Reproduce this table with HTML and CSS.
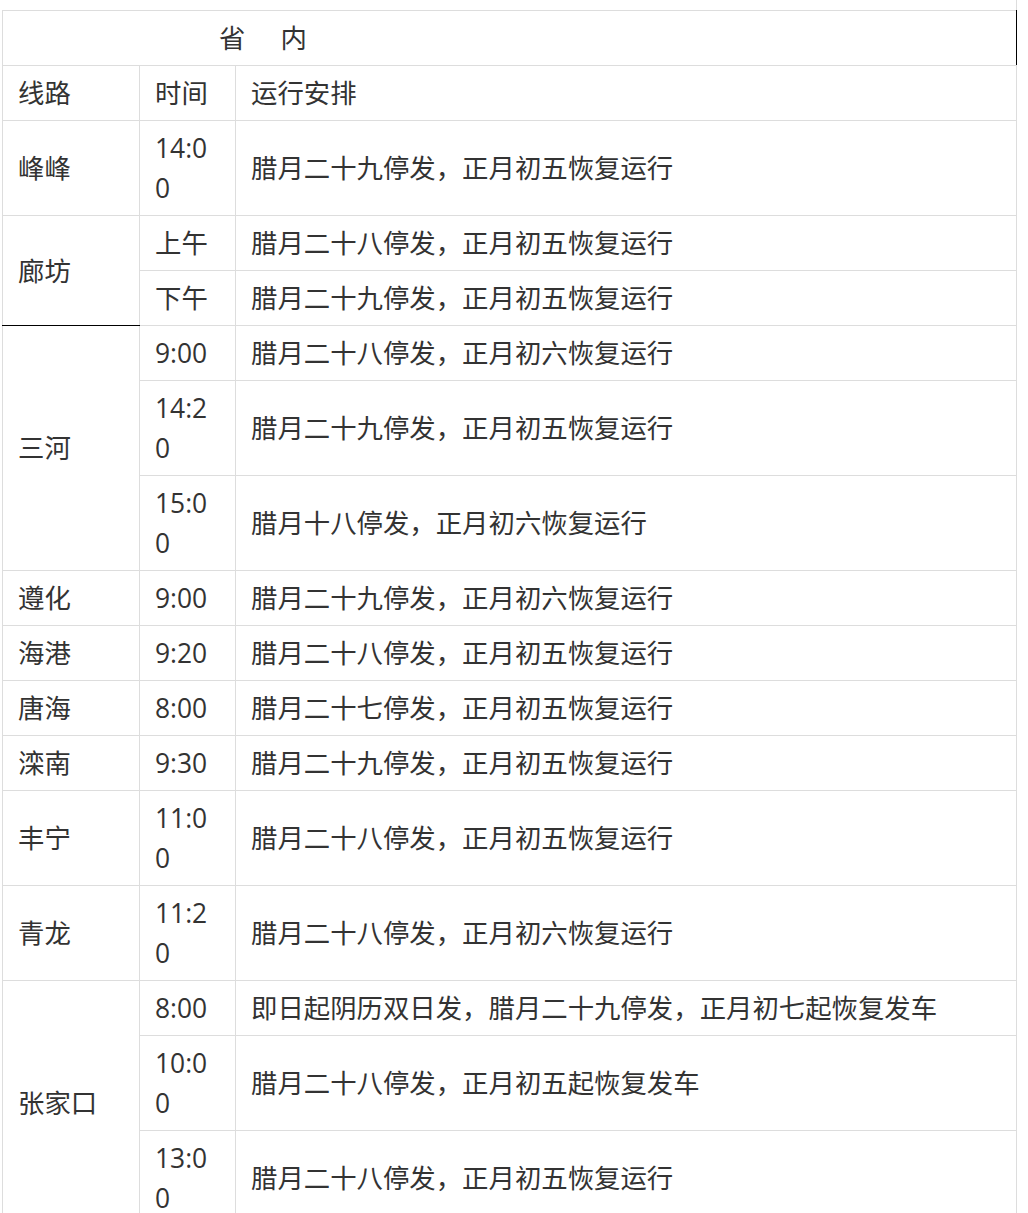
FILE: index.html
```html
<!DOCTYPE html>
<html lang="zh-CN">
<head>
<meta charset="utf-8">
<title>省内线路运行安排</title>
<link rel="stylesheet" href="styles.css">
</head>
<body>
<div class="page">
  <div class="top-edge"></div>
  <table class="schedule">
    <colgroup>
      <col class="c-route">
      <col class="c-time">
      <col class="c-plan">
    </colgroup>
    <tr class="title-row">
      <td colspan="3" class="title">省<span class="gap"></span>内</td>
    </tr>
    <tr>
      <td>线路</td><td class="time">时间</td><td>运行安排</td>
    </tr>
    <tr>
      <td>峰峰</td><td class="time">14:00</td><td>腊月二十九停发，正月初五恢复运行</td>
    </tr>
    <tr>
      <td rowspan="2" class="dark-bottom">廊坊</td><td class="time">上午</td><td>腊月二十八停发，正月初五恢复运行</td>
    </tr>
    <tr>
      <td class="time">下午</td><td>腊月二十九停发，正月初五恢复运行</td>
    </tr>
    <tr>
      <td rowspan="3">三河</td><td class="time">9:00</td><td>腊月二十八停发，正月初六恢复运行</td>
    </tr>
    <tr>
      <td class="time">14:20</td><td>腊月二十九停发，正月初五恢复运行</td>
    </tr>
    <tr>
      <td class="time">15:00</td><td>腊月十八停发，正月初六恢复运行</td>
    </tr>
    <tr>
      <td>遵化</td><td class="time">9:00</td><td>腊月二十九停发，正月初六恢复运行</td>
    </tr>
    <tr>
      <td>海港</td><td class="time">9:20</td><td>腊月二十八停发，正月初五恢复运行</td>
    </tr>
    <tr>
      <td>唐海</td><td class="time">8:00</td><td>腊月二十七停发，正月初五恢复运行</td>
    </tr>
    <tr>
      <td>滦南</td><td class="time">9:30</td><td>腊月二十九停发，正月初五恢复运行</td>
    </tr>
    <tr>
      <td>丰宁</td><td class="time">11:00</td><td>腊月二十八停发，正月初五恢复运行</td>
    </tr>
    <tr>
      <td>青龙</td><td class="time">11:20</td><td>腊月二十八停发，正月初六恢复运行</td>
    </tr>
    <tr>
      <td rowspan="3">张家口</td><td class="time">8:00</td><td>即日起阴历双日发，腊月二十九停发，正月初七起恢复发车</td>
    </tr>
    <tr>
      <td class="time">10:00</td><td>腊月二十八停发，正月初五起恢复发车</td>
    </tr>
    <tr>
      <td class="time">13:00</td><td>腊月二十八停发，正月初五恢复运行</td>
    </tr>
  </table>
</div>
</body>
</html>
```
FILE: styles.css
```css
html, body {
  margin: 0;
  padding: 0;
  background: #ffffff;
}

.page {
  padding: 0 0 0 2px;
}

.top-edge {
  width: 1015px;
  height: 10px;
  box-sizing: border-box;
  border-right: 1px solid #dddddd;
}

.schedule {
  width: 1015px;
  border-collapse: collapse;
  table-layout: fixed;
  font-family: "Open Sans", "Noto Sans CJK SC", sans-serif;
  font-size: 26.4px;
  line-height: 40px;
  color: #333333;
}

.c-route { width: 137px; }
.c-time { width: 96px; }

.schedule td {
  border: 1px solid #dddddd;
  padding: 7px 15px;
  vertical-align: middle;
  text-align: left;
}

.schedule td.time {
  word-break: break-all;
}

.title-row td.title {
  height: 40px;
  padding-left: 216px;
  border-right: 1px solid #000000;
}

.title .gap {
  display: inline-block;
  width: 35px;
}

.schedule td.dark-bottom {
  border-bottom: 1px solid #000000;
}
```
